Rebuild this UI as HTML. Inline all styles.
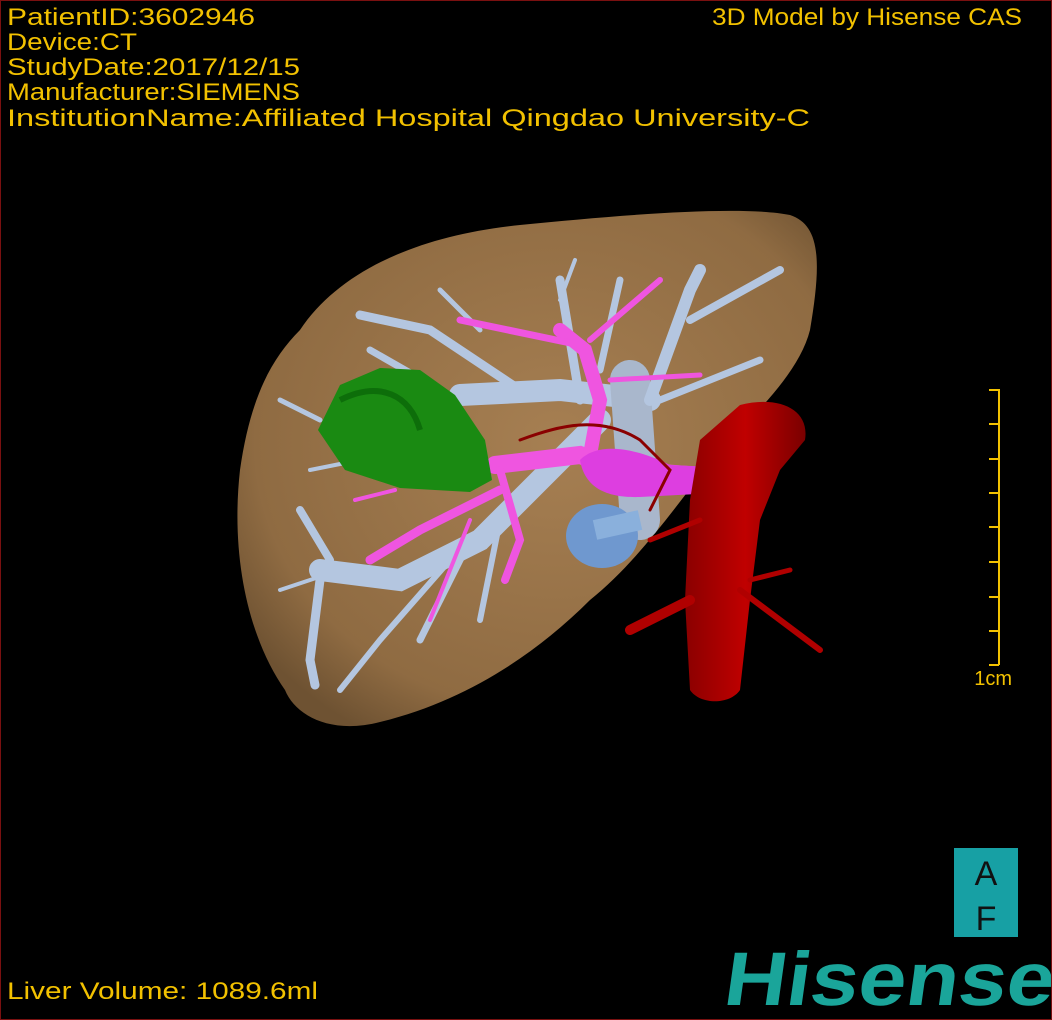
<!DOCTYPE html>
<html><head><meta charset="utf-8"><style>
html,body{margin:0;padding:0;background:#000}
#w{position:relative;width:1050px;height:1018px;border:1px solid #7a1010;background:#000;overflow:hidden}
svg{position:absolute;left:-1px;top:-1px}
.t{font-family:"Liberation Sans",sans-serif;font-size:24px;fill:#f2c100}
</style></head><body><div id="w">
<svg width="1052" height="1020" viewBox="0 0 1052 1020">
<defs>
<radialGradient id="lv" cx="0.55" cy="0.45" r="0.65"><stop offset="0" stop-color="#a67f52"/><stop offset="0.8" stop-color="#8f6b42"/><stop offset="1" stop-color="#6e5232"/></radialGradient>
<linearGradient id="ao" x1="0" x2="1"><stop offset="0" stop-color="#8a0000"/><stop offset="0.5" stop-color="#c00000"/><stop offset="1" stop-color="#7a0000"/></linearGradient>
</defs>
<path d="M300,330 C340,270 420,235 520,225 C620,215 740,205 790,215 C820,225 822,260 810,330 C800,370 760,410 720,450 C680,500 640,560 590,600 C540,650 470,700 380,722 C330,735 295,715 285,690 C250,640 230,560 240,470 C250,400 270,360 300,330 Z" fill="url(#lv)"/>
<g stroke="#b4c6e0" stroke-linecap="round" fill="none">
<path d="M460,395 L560,390 L650,400" stroke-width="22"/>
<path d="M630,380 L640,520" stroke-width="40" stroke="#a9b7cc"/>
<path d="M580,400 L560,280" stroke-width="9"/>
<path d="M520,390 L430,330 L360,315" stroke-width="9"/>
<path d="M440,390 L370,350" stroke-width="7"/>
<path d="M650,400 L690,290 L700,270" stroke-width="12"/>
<path d="M690,320 L780,270" stroke-width="8"/>
<path d="M660,400 L760,360" stroke-width="7"/>
<path d="M600,370 L620,280" stroke-width="7"/>
<path d="M480,330 L440,290" stroke-width="5"/>
<path d="M560,300 L575,260" stroke-width="4"/>
<path d="M600,420 L480,540 L400,580 L320,570" stroke-width="22"/>
<path d="M330,560 L300,510" stroke-width="8"/>
<path d="M320,580 L310,660 L315,685" stroke-width="9"/>
<path d="M470,540 L420,640" stroke-width="7"/>
<path d="M450,560 L380,640 L340,690" stroke-width="6"/>
<path d="M500,520 L480,620" stroke-width="6"/>
<path d="M340,570 L280,590" stroke-width="4"/>
<path d="M320,420 L280,400" stroke-width="5"/>
<path d="M360,460 L310,470" stroke-width="4"/>
</g>
<g stroke="#ef55e0" stroke-linecap="round" fill="none">
<path d="M495,465 L580,455 L620,470 L730,478" stroke-width="18"/>
<path d="M590,455 L600,400 L585,350 L560,330" stroke-width="14"/>
<path d="M580,345 L460,320" stroke-width="7"/>
<path d="M590,340 L660,280" stroke-width="6"/>
<path d="M610,380 L700,375" stroke-width="5"/>
<path d="M500,470 L520,540 L505,580" stroke-width="8"/>
<path d="M500,490 L420,530 L370,560" stroke-width="9"/>
<path d="M470,520 L430,620" stroke-width="4"/>
<path d="M395,490 L355,500" stroke-width="4"/>
</g>
<path d="M580,460 C600,440 640,450 670,465 L735,468 L735,492 L640,497 C610,498 585,490 580,460Z" fill="#dd3ee0"/>
<ellipse cx="602" cy="536" rx="36" ry="32" fill="#6f98cf"/>
<path d="M595,530 L640,520" stroke="#8ab0dc" stroke-width="20"/>
<path d="M318,430 L340,385 L380,368 L420,370 L455,395 L485,440 L492,480 L470,492 L400,488 L345,470 Z" fill="#1a8a12"/>
<path d="M340,400 C380,380 410,395 420,430" stroke="#0d6e0a" stroke-width="6" fill="none"/>
<path d="M740,405 C780,395 810,410 805,440 L780,470 L760,520 L750,600 L740,690 C730,705 700,705 690,690 L685,600 L690,500 L700,440 Z" fill="url(#ao)"/>
<g stroke="#b00000" stroke-linecap="round" fill="none">
<path d="M690,600 L630,630" stroke-width="10"/>
<path d="M740,590 L820,650" stroke-width="6"/>
<path d="M750,580 L790,570" stroke-width="5"/>
<path d="M700,520 L650,540" stroke-width="5"/>
<path d="M520,440 C560,425 600,415 640,440 L670,470 L650,510" stroke="#8a0000" stroke-width="3"/>
</g>
<g stroke="#f2c100" stroke-width="2"><path d="M999,389 V665"/>
<path d="M989,390 H999 M989,424 H999 M989,459 H999 M989,493 H999 M989,527 H999 M989,562 H999 M989,597 H999 M989,631 H999 M989,665 H999"/></g>
<rect x="954" y="848" width="64" height="89" fill="#17a0a4"/>
<text x="986" y="885" font-family="Liberation Sans,sans-serif" font-size="34" fill="#111" text-anchor="middle">A</text>
<text x="986" y="930" font-family="Liberation Sans,sans-serif" font-size="34" fill="#111" text-anchor="middle">F</text>
<text x="722" y="1005" font-family="Liberation Sans,sans-serif" font-size="76" font-weight="bold" fill="#1aa59a" textLength="330" lengthAdjust="spacingAndGlyphs" transform="skewX(-8) translate(141,0)">Hisense</text>
<text x="1012" y="685" font-family="Liberation Sans,sans-serif" font-size="20" fill="#f2c100" text-anchor="end">1cm</text>
<text class="t" x="7" y="25" textLength="248" lengthAdjust="spacingAndGlyphs">PatientID:3602946</text>
<text class="t" x="7" y="50" textLength="130" lengthAdjust="spacingAndGlyphs">Device:CT</text>
<text class="t" x="7" y="75" textLength="293" lengthAdjust="spacingAndGlyphs">StudyDate:2017/12/15</text>
<text class="t" x="7" y="100" textLength="293" lengthAdjust="spacingAndGlyphs">Manufacturer:SIEMENS</text>
<text class="t" x="7" y="126" textLength="803" lengthAdjust="spacingAndGlyphs">InstitutionName:Affiliated Hospital Qingdao University-C</text>
<text class="t" x="712" y="25" textLength="310" lengthAdjust="spacingAndGlyphs">3D Model by Hisense CAS</text>
<text class="t" x="7" y="999" textLength="311" lengthAdjust="spacingAndGlyphs">Liver Volume: 1089.6ml</text>
</svg>
</div></body></html>
